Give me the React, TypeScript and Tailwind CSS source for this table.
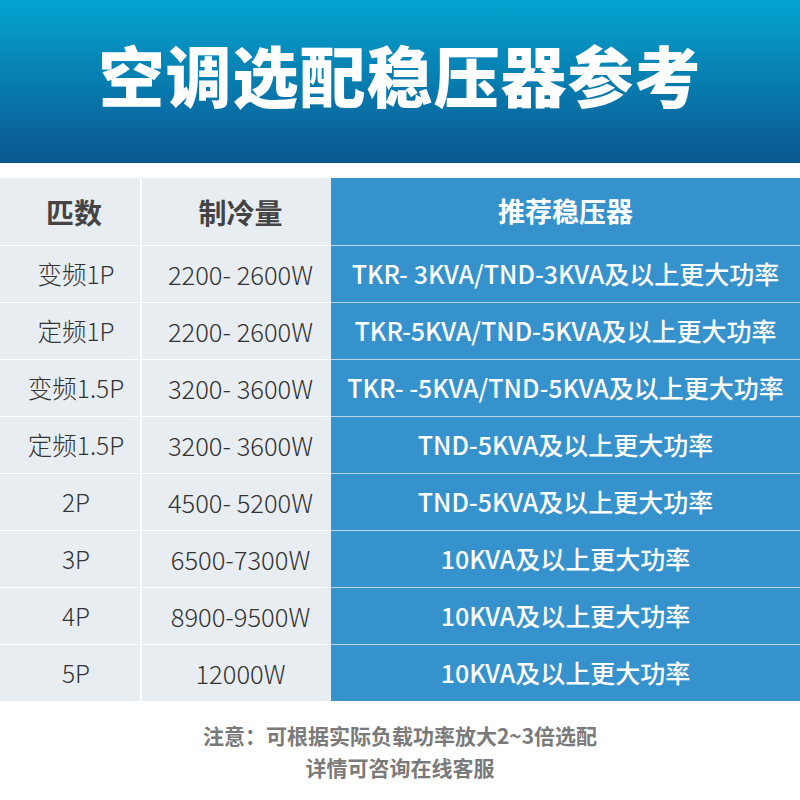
import React from 'react';

const rows: { p: string; cool: string; rec: string }[] = [
  { p: '变频1P', cool: '2200- 2600W', rec: 'TKR- 3KVA/TND-3KVA及以上更大功率' },
  { p: '定频1P', cool: '2200- 2600W', rec: 'TKR-5KVA/TND-5KVA及以上更大功率' },
  { p: '变频1.5P', cool: '3200- 3600W', rec: 'TKR- -5KVA/TND-5KVA及以上更大功率' },
  { p: '定频1.5P', cool: '3200- 3600W', rec: 'TND-5KVA及以上更大功率' },
  { p: '2P', cool: '4500- 5200W', rec: 'TND-5KVA及以上更大功率' },
  { p: '3P', cool: '6500-7300W', rec: '10KVA及以上更大功率' },
  { p: '4P', cool: '8900-9500W', rec: '10KVA及以上更大功率' },
  { p: '5P', cool: '12000W', rec: '10KVA及以上更大功率' },
];

const font = { fontFamily: '"Noto Sans CJK SC", "Noto Sans", sans-serif' };

export default function App() {
  return (
    <div className="w-[800px] h-[800px] bg-white overflow-hidden" style={font}>
      {/* title banner */}
      <div className="h-[163px] bg-gradient-to-b from-[#03a4d0] to-[#0b5790] flex items-center justify-center">
        <h1 className="text-[66px] leading-none font-black text-white tracking-[1px] -mt-[18px]">
          空调选配稳压器参考
        </h1>
      </div>

      <div className="mt-[15px]">
        {/* header row */}
        <div className="grid grid-cols-[142px_189px_1fr] h-[67px]">
          <div className="bg-[#e8edf1] border-r-2 border-white flex items-center justify-center pl-[8px] text-[28px] font-bold text-[#444]">
            匹数
          </div>
          <div className="bg-[#e8edf1] flex items-center justify-center pl-[8px] text-[28px] font-bold text-[#444]">
            制冷量
          </div>
          <div className="bg-[#3592cd] flex items-center justify-center text-[27px] font-bold text-white">
            推荐稳压器
          </div>
        </div>

        {rows.map((r, i) => (
          <div key={i} className="grid grid-cols-[142px_189px_1fr] h-[57px]">
            <div className="bg-[#e8edf1] border-t border-r-2 border-white flex items-center justify-center pl-[12px] text-[24.5px] font-light text-[#333]">
              {r.p}
            </div>
            <div className="bg-[#e8edf1] border-t border-white flex items-center justify-center pl-[8px] text-[25.5px] font-light text-[#333]">
              {r.cool}
            </div>
            <div className="bg-[#3592cd] border-t border-[#b9d6ec] flex items-center justify-center text-[25px] font-medium text-white">
              {r.rec}
            </div>
          </div>
        ))}
      </div>

      {/* footnote */}
      <div className="pt-[18px] flex flex-col items-center text-[21px] leading-[32px] font-bold text-[#7a7a7a]">
        <p>注意：可根据实际负载功率放大2~3倍选配</p>
        <p>详情可咨询在线客服</p>
      </div>
    </div>
  );
}
